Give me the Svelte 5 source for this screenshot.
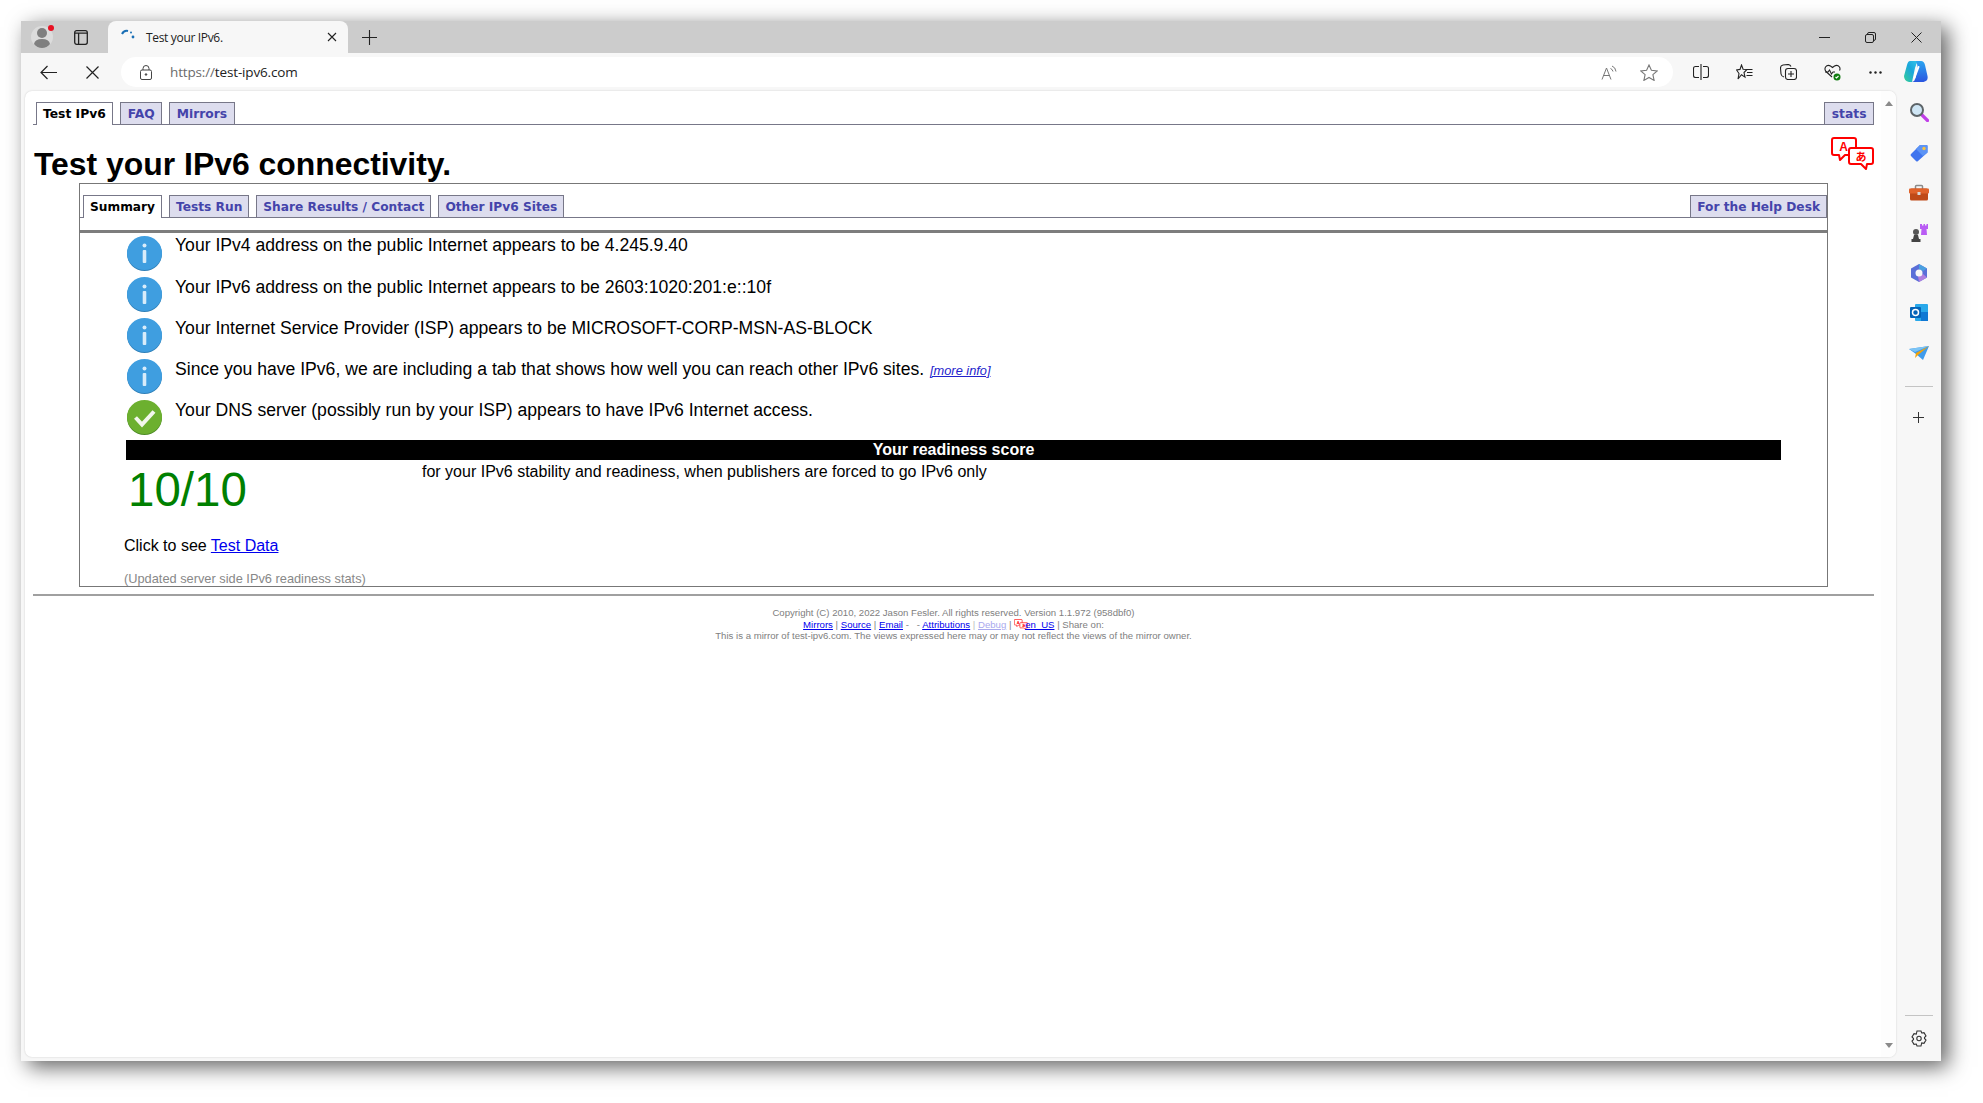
<script>
  const topTabs = ['FAQ', 'Mirrors'];
  const innerTabs = ['Tests Run', 'Share Results / Contact', 'Other IPv6 Sites'];
  const rows = [
    { kind: 'info', text: 'Your IPv4 address on the public Internet appears to be 4.245.9.40' },
    { kind: 'info', text: 'Your IPv6 address on the public Internet appears to be 2603:1020:201:e::10f' },
    { kind: 'info', text: 'Your Internet Service Provider (ISP) appears to be MICROSOFT-CORP-MSN-AS-BLOCK' },
    { kind: 'info', text: 'Since you have IPv6, we are including a tab that shows how well you can reach other IPv6 sites.', more: true },
    { kind: 'ok', text: 'Your DNS server (possibly run by your ISP) appears to have IPv6 Internet access.' }
  ];
</script>

{#snippet translate(cls)}
  <svg class={cls} viewBox="0 0 43 33" fill="#fff" stroke="#f00" stroke-width="2" stroke-linejoin="round">
    <path d="M3 1h20q2 0 2 2v13q0 2-2 2H14l-5 5-1-5H3q-2 0-2-2V3q0-2 2-2z" />
    <path d="M20 11h20q2 0 2 2v12q0 2-2 2h-4l-1 5-5-5H20q-2 0-2-2V13q0-2 2-2z" />
    <text x="12.5" y="13.500" font-size="12" font-weight="700" font-family="Liberation Sans, sans-serif" text-anchor="middle" fill="#f00" stroke="none">A</text>
    <text x="30" y="23.500" font-size="11" font-weight="700" font-family="Noto Sans CJK JP, sans-serif" text-anchor="middle" fill="#f00" stroke="none">あ</text>
  </svg>
{/snippet}

<div class="window">
  <div class="titlebar">
    <div class="profile">
      <svg width="26" height="26" viewBox="0 0 26 26">
        <circle cx="11" cy="13" r="11" fill="#dcdcdc" />
        <circle cx="11" cy="9" r="5" fill="#7f7f7f" />
        <path d="M3 20q1-5 8-5t8 5q-3 4-8 4t-8-4z" fill="#7f7f7f" />
        <circle cx="20" cy="4" r="3" fill="#e81123" />
      </svg>
    </div>
    <div class="tabs-btn">
      <svg width="14" height="15" viewBox="0 0 14 15" fill="none" stroke="#222" stroke-width="1.300"><rect x=".7" y=".7" width="12.600" height="13.600" rx="2" /><path d="M.7 3.200h12.600M4.600 3.200v11" /></svg>
    </div>
    <div class="tab">
      <svg width="14" height="10" viewBox="0 0 14 10"><path d="M1 5q2-4 6-3" fill="none" stroke="#1a6fb5" stroke-width="2" /><circle cx="12" cy="8" r="1.400" fill="#1a6fb5" /><circle cx="10" cy="3.500" r="1" fill="#1a6fb5" /></svg>
      <span class="tab-title">Test your IPv6.</span>
      <svg class="tab-x" width="10" height="10" viewBox="0 0 10 10" stroke="#222" stroke-width="1.100"><path d="M1 1l8 8M9 1l-8 8" /></svg>
    </div>
    <svg class="newtab" width="15" height="15" viewBox="0 0 15 15" stroke="#222" stroke-width="1.100"><path d="M7.500 0v15M0 7.500h15" /></svg>
    <div class="spacer"></div>
    <svg class="wc wc1" width="11" height="11" viewBox="0 0 11 11" stroke="#222"><path d="M0 5.500h11" /></svg>
    <svg class="wc wc2" width="11" height="11" viewBox="0 0 11 11" fill="none" stroke="#222"><rect x=".5" y="2.500" width="8" height="8" rx="1.500" /><path d="M2.500 2.500v-.5q0-1.500 1.500-1.500h5q1.500 0 1.500 1.500v5q0 1.500-2 1.500" /></svg>
    <svg class="wc wc3" width="11" height="11" viewBox="0 0 11 11" stroke="#222"><path d="M.5.5l10 10M10.500.5l-10 10" /></svg>
  </div>

  <div class="toolbar">
    <svg class="tb back" width="17" height="15" viewBox="0 0 17 15" fill="none" stroke="#222" stroke-width="1.200"><path d="M17 7.500H1M7.500 1L1 7.500 7.500 14" /></svg>
    <svg class="tb stop" width="13" height="13" viewBox="0 0 13 13" stroke="#222" stroke-width="1.200"><path d="M.5.5l12 12M12.500.5l-12 12" /></svg>
    <div class="address">
      <svg width="12" height="15" viewBox="0 0 12 15" fill="none" stroke="#444"><rect x=".5" y="5" width="11" height="9.500" rx="1.500" /><path d="M3 5V3.500a3 3 0 016 0V5" /><circle cx="6" cy="9.500" r=".8" fill="#444" /></svg>
      <span class="url"><span class="scheme">https://</span>test-ipv6.com</span>
      <span class="spacer"></span>
      <svg class="readaloud" width="16" height="15" viewBox="0 0 16 15" fill="none" stroke="#777" stroke-width="1"><path d="M1 14.500L5.500 3 10 14.500M2.700 10.500h5.800" /><path d="M9.500 3.500q2 .8 2.500 3M11 1q3.500 1.300 4 5.500" /></svg>
      <svg class="fav" width="18" height="17" viewBox="0 0 18 17" fill="none" stroke="#777" stroke-width="1.100"><path d="M9 1l2.400 5.300 5.800.6-4.300 3.800 1.200 5.700L9 13.500l-5.100 2.900 1.200-5.700L.8 6.900l5.800-.6z" /></svg>
    </div>
    <svg class="tbi first" width="16" height="16" viewBox="0 0 16 16" fill="none" stroke="#222" stroke-width="1.100"><path d="M6 2.500H2.500q-2 0-2 2v7q0 2 2 2H6M10 2.500h3.500q2 0 2 2v7q0 2-2 2H10M8 0v16" /></svg>
    <svg class="tbi" width="17" height="16" viewBox="0 0 17 16" fill="none" stroke="#222" stroke-width="1.100"><path d="M5.500 1l1.600 4.200 3.900.3L8 8.500l1 4.600-3.500-2.400L2 15l1-5.500L.6 6l3.400-.6zM10.500 5.500h6M11 8.500h5.500M10.500 11.500h6" /></svg>
    <svg class="tbi" width="17" height="16" viewBox="0 0 17 16" fill="none" stroke="#222" stroke-width="1.100"><path d="M4 13q-2.500-.5-3-3l-.5-6Q.5 1.500 3 1l5-.5q2 0 3 2" /><rect x="5.500" y="4.500" width="11" height="11" rx="2.500" /><path d="M11 7v6M8 10h6" /></svg>
    <svg class="tbi" width="17" height="17" viewBox="0 0 17 17" fill="none" stroke="#222" stroke-width="1.100"><path d="M8 13L2 7.500Q.2 5.500 1.500 3q2-2.500 5-1l2 1.500 2-1.500q3-1.500 5 1 1 2 0 3.500" /><path d="M1 8h3l1.500-2 2 4 1.500-2h2" /><circle cx="13" cy="13" r="3.500" fill="#107c10" stroke="none" /><path d="M11.500 13l1 1 2-2" stroke="#fff" /></svg>
    <svg class="tbi dots" width="13" height="3" viewBox="0 0 13 3" fill="#222"><circle cx="1.500" cy="1.500" r="1.200" /><circle cx="6.500" cy="1.500" r="1.200" /><circle cx="11.500" cy="1.500" r="1.200" /></svg>
    <svg class="copilot" width="25" height="24" viewBox="0 0 25 24">
      <defs>
        <linearGradient id="cpa" x1="0" y1="1" x2="1" y2="0"><stop offset="0" stop-color="#35cf96" /><stop offset=".55" stop-color="#1aa6dc" /><stop offset="1" stop-color="#36c6ea" /></linearGradient>
        <linearGradient id="cpb" x1="0" y1="0" x2="0" y2="1"><stop offset="0" stop-color="#2aa5f0" /><stop offset="1" stop-color="#2a55e0" /></linearGradient>
      </defs>
      <path d="M7 1h8q-2 3-3 7L9 22H6q-5-1-5-6L4 5q1-4 3-4z" fill="url(#cpa)" />
      <path d="M13 1h5q3 0 4 4l2.500 11q1 5-4 6H9q3-1 3.500-4l2-9q.5-3-1.500-8z" fill="url(#cpb)" />
      <path d="M15.500 7l-4 10.500" stroke="#fff" stroke-width="2" stroke-linecap="round" />
    </svg>
  </div>

  <div class="body">
    <div class="page">
      <div class="content">
        <div class="tabbar top">
          <span class="t active">Test IPv6</span>
          {#each topTabs as t}<span class="t">{t}</span>{/each}
          <span class="spacer"></span>
          <span class="t edge">stats</span>
        </div>
        <div class="headrow">
          <h1>Test your IPv6 connectivity.</h1>
          {@render translate('lang')}
        </div>
        <div class="box">
          <div class="tabbar inner">
            <span class="t active">Summary</span>
            {#each innerTabs as t}<span class="t">{t}</span>{/each}
            <span class="spacer"></span>
            <span class="t edge">For the Help Desk</span>
          </div>
          <div class="thick"></div>
          {#each rows as r}
            <div class="row">
              {#if r.kind === 'info'}
                <svg class="ri" viewBox="0 0 35 35">
                  <ellipse cx="17.500" cy="18" rx="17.500" ry="17" fill="#2e7fb8" />
                  <ellipse cx="17.500" cy="17" rx="17.500" ry="17" fill="#3f9ee0" />
                  <circle cx="17.500" cy="9.500" r="2" fill="#d8ecfa" />
                  <rect x="15.700" y="14" width="3.600" height="13" rx="1" fill="#d8ecfa" />
                </svg>
              {:else}
                <svg class="ri" viewBox="0 0 35 35">
                  <ellipse cx="17.500" cy="18" rx="17.500" ry="17" fill="#4c8a25" />
                  <ellipse cx="17.500" cy="17" rx="17.500" ry="17" fill="#6cb02f" />
                  <path d="M8.500 17.500l6.500 7L27 11.500" fill="none" stroke="#f2f7ec" stroke-width="4" />
                </svg>
              {/if}
              <span class="rt">{r.text}{#if r.more}&nbsp;<a class="more" href="#more">[more info]</a>{/if}</span>
            </div>
          {/each}
          <div class="bar">Your readiness score</div>
          <div class="scorerow">
            <div class="score">10/10</div>
            <div class="desc">for your IPv6 stability and readiness, when publishers are forced to go IPv6 only</div>
          </div>
          <p class="click">Click to see <a href="#data">Test Data</a></p>
          <p class="updated">(Updated server side IPv6 readiness stats)</p>
        </div>
        <div class="hr"></div>
        <div class="footer">
          <div>Copyright (C) 2010, 2022 Jason Fesler. All rights reserved. Version 1.1.972 (958dbf0)</div>
          <div><a href="#m">Mirrors</a> | <a href="#s">Source</a> | <a href="#e">Email</a> - &nbsp; - <a href="#a">Attributions</a> <span class="faint">|</span> <a class="debug" href="#d">Debug</a> | {@render translate('mini')}<a href="#l">en_US</a> | Share on:</div>
          <div>This is a mirror of test-ipv6.com. The views expressed here may or may not reflect the views of the mirror owner.</div>
        </div>
      </div>
      <div class="scroll">
        <span class="up"></span>
        <span class="down"></span>
      </div>
    </div>
    <div class="side">
      <svg class="si" width="20" height="20" viewBox="0 0 20 20"><path d="M12.500 12.500l6 6" stroke="#c03fe8" stroke-width="3.200" stroke-linecap="round" /><circle cx="8" cy="8" r="6" fill="#cfe6f5" stroke="#5d6468" stroke-width="2" /></svg>
      <svg class="si" width="20" height="20" viewBox="0 0 20 20"><path d="M11 2h6.500q1 0 1 1v6.500L9 18q-1 1-2 0l-5-5q-1-1 0-2z" fill="#3f74ee" /><path d="M11 2h6.500q1 0 1 1v6.500L14 13 7 6z" fill="#5c93f5" /><circle cx="15" cy="5.500" r="1.700" fill="#f5c242" /></svg>
      <svg class="si" width="20" height="20" viewBox="0 0 20 20"><path d="M6.500 6V3.500q0-1 1-1h5q1 0 1 1V6" fill="none" stroke="#8a8a8a" stroke-width="1.500" /><rect x="1" y="5.500" width="18" height="12" rx="1.500" fill="#bf4a18" /><rect x="0" y="5.500" width="20" height="5" rx="1" fill="#e0622a" /><rect x="8.500" y="9" width="3" height="3" fill="#d8d8d8" /></svg>
      <svg class="si" width="20" height="20" viewBox="0 0 20 20"><circle cx="7" cy="9" r="3" fill="#555" /><path d="M5 12h4l1 4h1.500v3h-9v-3H4z" fill="#444" /><path d="M11 1h2v1.500h1.500V1h1.500v1.500h1.500V1H19v5h-1.500l.5 6h-6l.5-6H11z" fill="#b95cf4" /></svg>
      <svg class="si" width="20" height="20" viewBox="0 0 20 20"><path d="M10 1l8 4.500v9L10 19l-8-4.500v-9z" fill="#5a6fd8" /><path d="M10 1l8 4.500-4 2.500-4-2z" fill="#4aa0e0" /><path d="M18 14.500L10 19l-1-6 5-2z" fill="#b07fe0" /><circle cx="10" cy="10" r="3.500" fill="#f7f7f7" /></svg>
      <svg class="si" width="20" height="20" viewBox="0 0 20 20"><rect x="6" y="1" width="13" height="17" rx="1" fill="#28a8ea" /><rect x="12" y="9" width="7" height="9" fill="#0f78d4" /><rect x="1" y="4" width="11" height="11" rx="1" fill="#0364b8" /><circle cx="6.500" cy="9.500" r="3" fill="none" stroke="#fff" stroke-width="1.500" /></svg>
      <svg class="si" width="20" height="20" viewBox="0 0 20 20"><path d="M0 6l20-3-6 14-7-6z" fill="#3f9bec" /><path d="M0 6l20-3L6 9z" fill="#7cc4f5" /><path d="M20 3L7 10l-1 5 3-3z" fill="#f0a30a" /></svg>
      <div class="sline"></div>
      <svg class="plus" width="11" height="11" viewBox="0 0 11 11" stroke="#333"><path d="M5.500 0v11M0 5.500h11" /></svg>
      <div class="spacer"></div>
      <div class="sline low"></div>
      <svg class="gear" width="16" height="17" viewBox="0 0 16 17" fill="none" stroke="#333" stroke-width="1.100"><path d="M6 1h4l.7 2 2.300-.4 2 3.400-1.500 1.500v1l1.500 1.500-2 3.400-2.300-.4L10 16H6l-.7-2-2.300.4L1 11l1.500-1.500v-1L1 7l2-3.400 2.300.4z" /><circle cx="8" cy="8.500" r="2.200" /></svg>
    </div>
  </div>
</div>

<style>
  :global(html), :global(body) {
    margin: 0;
    height: 1103px;
    background: #fff;
    font-family: "Liberation Sans", Arial, sans-serif;
  }
  .spacer { flex: 1; }
  .window {
    margin: 21px 0 0 21px;
    width: 1920px;
    height: 1040px;
    background: #f7f7f7;
    box-shadow: 7px 6px 20px rgba(0, 0, 0, .62);
    display: flex;
    flex-direction: column;
    position: relative;
  }
  .titlebar {
    height: 32px;
    background: #ccc;
    display: flex;
    align-items: center;
    flex: none;
  }
  .profile { margin-left: 10px; height: 26px; }
  .tabs-btn { margin-left: 17px; height: 15px; }
  .tab {
    margin-left: 20px;
    width: 240px;
    height: 32px;
    background: #f7f7f7;
    border-radius: 8px 8px 0 0;
    display: flex;
    align-items: center;
    padding: 0 11px 0 13px;
    box-sizing: border-box;
  }
  .tab svg:first-child { margin-bottom: 6px; }
  .tab-title {
    margin-left: 11px;
    font: 12px "Open Sans", "Noto Sans", sans-serif;
    letter-spacing: -.33px;
    color: #222;
    flex: 1;
  }
  .newtab { margin-left: 14px; }
  .wc1 { margin-right: 35px; }
  .wc2 { margin-right: 35px; }
  .wc3 { margin-right: 19px; }
  .toolbar {
    height: 38px;
    display: flex;
    align-items: center;
    flex: none;
  }
  .back { margin-left: 19px; }
  .stop { margin-left: 29px; }
  .address {
    margin-left: 22px;
    width: 1552px;
    height: 30px;
    background: #fff;
    border-radius: 15px;
    display: flex;
    align-items: center;
    padding: 0 15px 0 19px;
    box-sizing: border-box;
  }
  .url {
    margin-left: 18px;
    font: 13.500px "Open Sans", "Noto Sans", sans-serif;
    letter-spacing: -.15px;
    color: #222;
  }
  .scheme { color: #6b6b6b; }
  .readaloud { margin-right: 23px; }
  .tbi.first { margin-left: 20px; }
  .tbi + .tbi { margin-left: 27px; }
  .tbi.dots { margin-left: 28px; }
  .copilot { margin-left: 21px; }
  .body {
    flex: 1;
    display: flex;
    min-height: 0;
  }
  .page {
    margin-left: 4px;
    width: 1871px;
    height: 966px;
    background: #fff;
    border-radius: 7px;
    box-shadow: 0 0 2px rgba(0, 0, 0, .18);
    display: flex;
    overflow: hidden;
  }
  .content {
    width: 1841px;
    margin-left: 8px;
    padding-top: 11px;
    flex: none;
  }
  .scroll {
    width: 15px;
    margin-left: 7px;
    background: #fdfdfd;
    display: flex;
    flex-direction: column;
    justify-content: space-between;
    align-items: center;
    padding: 10px 0 9px;
  }
  .up, .down { width: 0; height: 0; border: 4.500px solid transparent; }
  .up { border-bottom: 5px solid #8a8a8a; border-top: 0; }
  .down { border-top: 5px solid #8a8a8a; border-bottom: 0; }
  .side {
    flex: 1;
    display: flex;
    flex-direction: column;
    align-items: center;
    padding-top: 11px;
  }
  .si { margin-bottom: 20px; flex: none; }
  .si:first-child { margin-bottom: 21px; }
  .sline { width: 28px; height: 1px; background: #c4c4c4; margin-top: 3px; flex: none; }
  .plus { margin-top: 25px; }
  .sline.low { margin: 0 0 14px; }
  .gear { margin-bottom: 14px; }
  .tabbar {
    display: flex;
    height: 22px;
    border-bottom: 1px solid #778;
    gap: 7px;
    padding-left: 3px;
  }
  .t {
    height: 22px;
    box-sizing: border-box;
    border: 1px solid #778;
    border-bottom: 0;
    padding: 0 6px;
    background: #ddddee;
    color: #44a;
    font: 700 12.300px/23px "DejaVu Sans", Verdana, sans-serif;
    white-space: nowrap;
  }
  .top .t { padding: 0 6.500px; }
  .inner .t { font-size: 12.200px; }
  .t.active {
    background: #fff;
    color: #000;
    height: 23px;
  }
  .top .t.active { margin-left: 0; padding-left: 6px; }
  .headrow {
    height: 58px;
    display: flex;
    justify-content: space-between;
  }
  h1 {
    margin: 21px 0 0 1px;
    font-size: 31.900px;
    line-height: 37px;
    font-weight: 700;
    color: #000;
  }
  .lang { width: 43px; height: 33px; margin-top: 12px; }
  .box {
    margin-left: 46px;
    margin-right: 46px;
    border: 1px solid #777;
    height: 404px;
    box-sizing: border-box;
    padding-top: 11px;
  }
  .thick {
    height: 3px;
    background: #7d7d7d;
    margin-top: 12px;
    margin-bottom: 3px;
  }
  .row {
    height: 41px;
    display: flex;
    padding-left: 47px;
    gap: 13px;
  }
  .ri { width: 35px; height: 35px; flex: none; }
  .rt {
    font-size: 17.600px;
    line-height: 20px;
    margin-top: 0;
    color: #000;
  }
  .thick + .row .rt { margin-top: -1px; }
  .more {
    font-size: 12.800px;
    font-style: italic;
    margin-left: 1px;
    color: #2222cc;
  }
  .bar {
    margin: -1px 46px 0 46px;
    height: 20px;
    background: #000;
    color: #fff;
    font-size: 16px;
    font-weight: 700;
    line-height: 20px;
    text-align: center;
  }
  .scorerow { display: flex; padding: 3px 0 0 46px; height: 58px; }
  .score {
    width: 296px;
    box-sizing: border-box;
    padding-left: 2px;
    margin-top: -1px;
    font-size: 47.500px;
    line-height: 55px;
    color: #008000;
  }
  .desc { font-size: 16px; line-height: 18px; color: #000; }
  .click {
    margin: 16px 0 0 44px;
    font-size: 16px;
    line-height: 18px;
    color: #000;
  }
  a { color: #00e; }
  .updated {
    margin: 16px 0 0 44px;
    font-size: 12.800px;
    line-height: 16px;
    color: #888;
  }
  .hr {
    height: 2px;
    background: #a0a0a0;
    margin-top: 7px;
  }
  .footer {
    margin-top: 11px;
    text-align: center;
    font-size: 9.600px;
    line-height: 11.500px;
    color: #808080;
  }
  .footer > div { height: 11.500px; }
  .faint { color: #bbb; }
  .debug { color: #a9a9ee; }
  .mini { width: 14px; height: 11px; vertical-align: 1px; margin: -3px -3px -3px 0; }
</style>
